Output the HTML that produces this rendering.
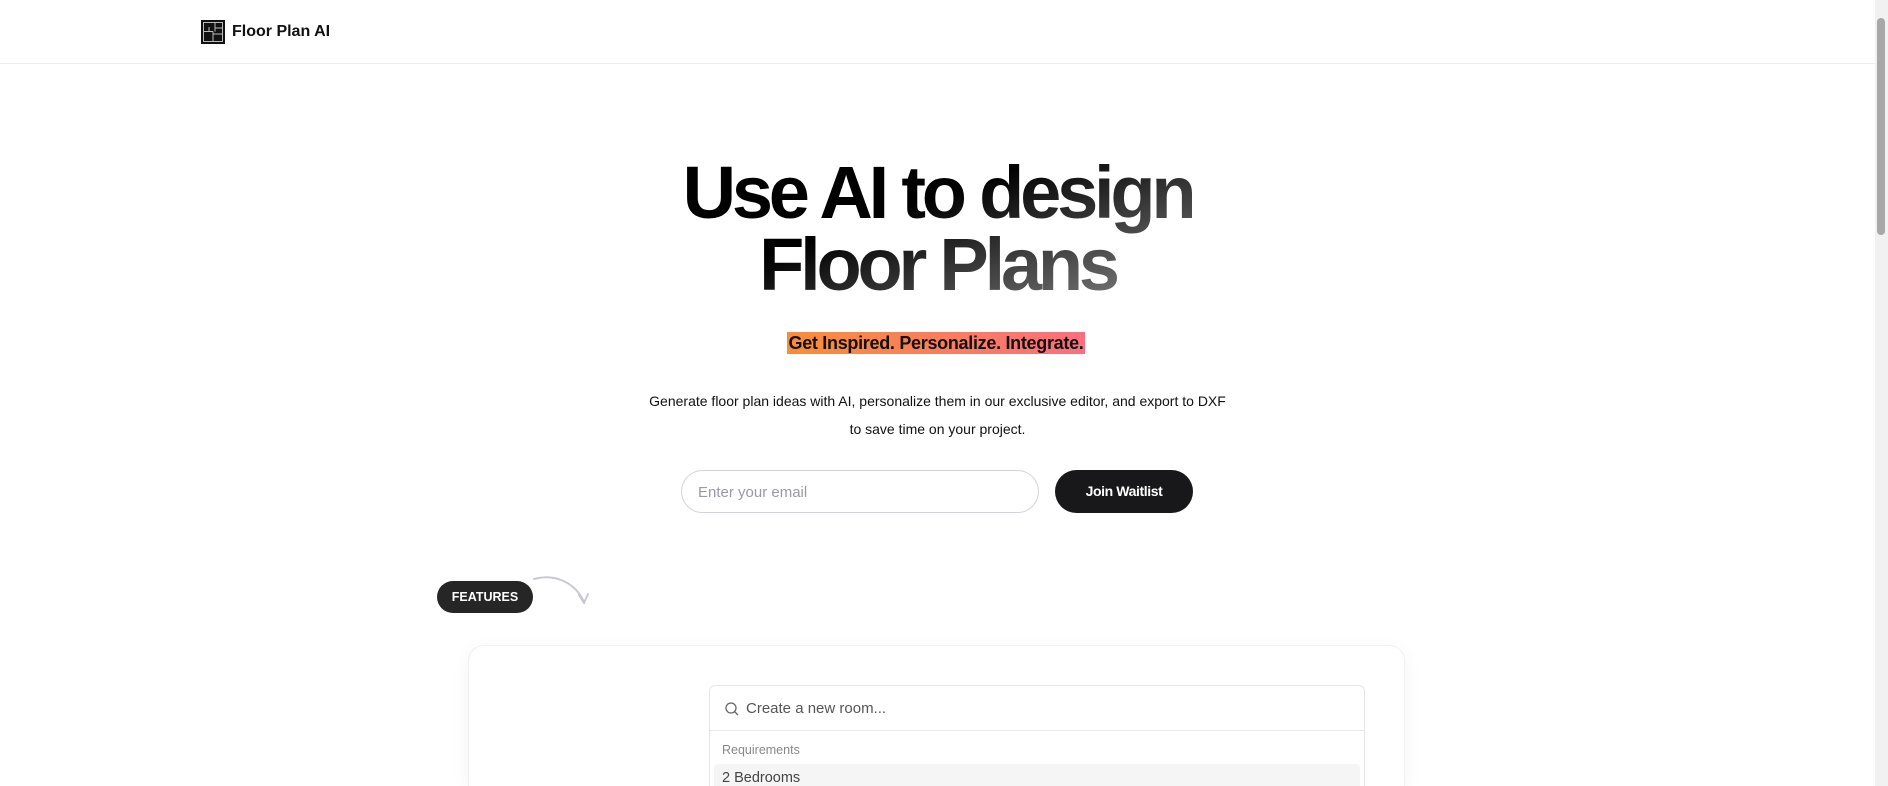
<!DOCTYPE html>
<html><head><meta charset="utf-8"><style>
*{margin:0;padding:0;box-sizing:border-box}
html,body{width:1888px;height:786px;overflow:hidden;background:#fff;font-family:"Liberation Sans",Arial,sans-serif;color:#111}
.wrap{position:relative;width:1888px;height:786px;overflow:hidden}
.hdr{position:absolute;left:0;top:0;width:1875px;height:64px;border-bottom:1px solid #eee}
.logo{position:absolute;left:201px;top:20px;width:24px;height:24px;background:#111}
.brand{position:absolute;left:232px;top:23px;font-size:16px;font-weight:bold;color:#111}
h1{position:absolute;left:0;width:1875px;top:157px;text-align:center;font-size:74px;line-height:72px;font-weight:bold;letter-spacing:-4.2px}
h1 span{background:linear-gradient(160deg,#000 0%,#000 40%,#888 100%);-webkit-background-clip:text;background-clip:text;color:transparent;display:inline-block;padding:0 6px}
.tag{position:absolute;left:787px;top:332px;width:298px;height:22px;background:linear-gradient(90deg,#f98d3a,#f9707f);font-size:18px;font-weight:bold;line-height:22px;text-align:center;letter-spacing:-0.3px;color:#111}
.p{position:absolute;left:0;width:1875px;top:387px;text-align:center;font-size:14px;line-height:28px;color:#111}
.inp{position:absolute;left:681px;top:470px;width:358px;height:43px;border:1px solid #d4d4d8;border-radius:22px;font-size:15px;color:#9a9aa2;padding:13px 16px}
.btn{position:absolute;left:1055px;top:470px;width:138px;height:43px;border-radius:22px;background:#18181a;color:#fff;font-size:14px;font-weight:bold;text-align:center;line-height:43px;letter-spacing:-0.4px}
.feat{position:absolute;left:437px;top:581px;width:96px;height:32px;border-radius:16px;background:#262626;color:#fff;font-size:12.5px;font-weight:bold;text-align:center;line-height:32px}
.card{position:absolute;left:468px;top:645px;width:937px;height:141px;border:1px solid #f0f0f0;border-bottom:none;border-radius:16px 16px 0 0;box-shadow:0 4px 18px rgba(0,0,0,.05)}
.box{position:absolute;left:709px;top:685px;width:656px;height:101px;border:1px solid #e5e5e5;border-bottom:none;border-radius:6px 6px 0 0;background:#fff;overflow:hidden}
.srch{height:45px;border-bottom:1px solid #e8e8e8;position:relative}
.srch span{position:absolute;left:36px;top:14px;font-size:15px;color:#555}
.req{position:absolute;left:12px;top:57px;font-size:12.5px;color:#888}
.row{position:absolute;left:4px;top:78px;width:646px;height:23px;background:#f5f5f5;border-radius:4px 4px 0 0;overflow:hidden}
.row span{position:absolute;left:8px;top:6px;font-size:14.5px;color:#444}
.sb{position:absolute;left:1875px;top:0;width:13px;height:786px;background:#f1f1f1}
.th{position:absolute;left:1877px;top:18px;width:8px;height:217px;background:#a8a8a8;border-radius:4px}
</style></head><body><div class="wrap">
<div class="hdr"></div>
<svg class="logo" viewBox="0 0 24 24" style="background:#111"><g fill="none" stroke="#bbb" stroke-width="1"><rect x="2.5" y="2.5" width="19" height="19"/><path d="M2.5 11.5H8V7M8 11.5H12M14 2.5V8H21.5M12 11.5V14H21.5M12 14V21.5M14 8V11.5"/></g></svg>
<div class="brand">Floor Plan AI</div>
<h1><span>Use AI to design<br>Floor Plans</span></h1>
<div class="tag">Get Inspired. Personalize. Integrate.</div>
<div class="p">Generate floor plan ideas with AI, personalize them in our exclusive editor, and export to DXF<br>to save time on your project.</div>
<div class="inp">Enter your email</div>
<div class="btn">Join Waitlist</div>
<div class="feat">FEATURES</div>
<svg style="position:absolute;left:530px;top:574px" width="62" height="36" viewBox="0 0 62 36"><path d="M4 5C22 0 44 6 54 28M54 29L49 21M54 29L58 20" fill="none" stroke="#c8c9d0" stroke-width="2" stroke-linecap="round"/></svg>
<div class="card"></div>
<div class="box">
<div class="srch"><svg style="position:absolute;left:14px;top:15px" width="16" height="16" viewBox="0 0 16 16"><circle cx="7" cy="7" r="5" fill="none" stroke="#666" stroke-width="1.3"/><path d="M10.5 10.5L14 14" stroke="#666" stroke-width="1.3"/></svg><span>Create a new room...</span></div>
<div class="req">Requirements</div>
<div class="row"><span>2 Bedrooms</span></div>
</div>
<div class="sb"></div><div class="th"></div>
</div></body></html>
